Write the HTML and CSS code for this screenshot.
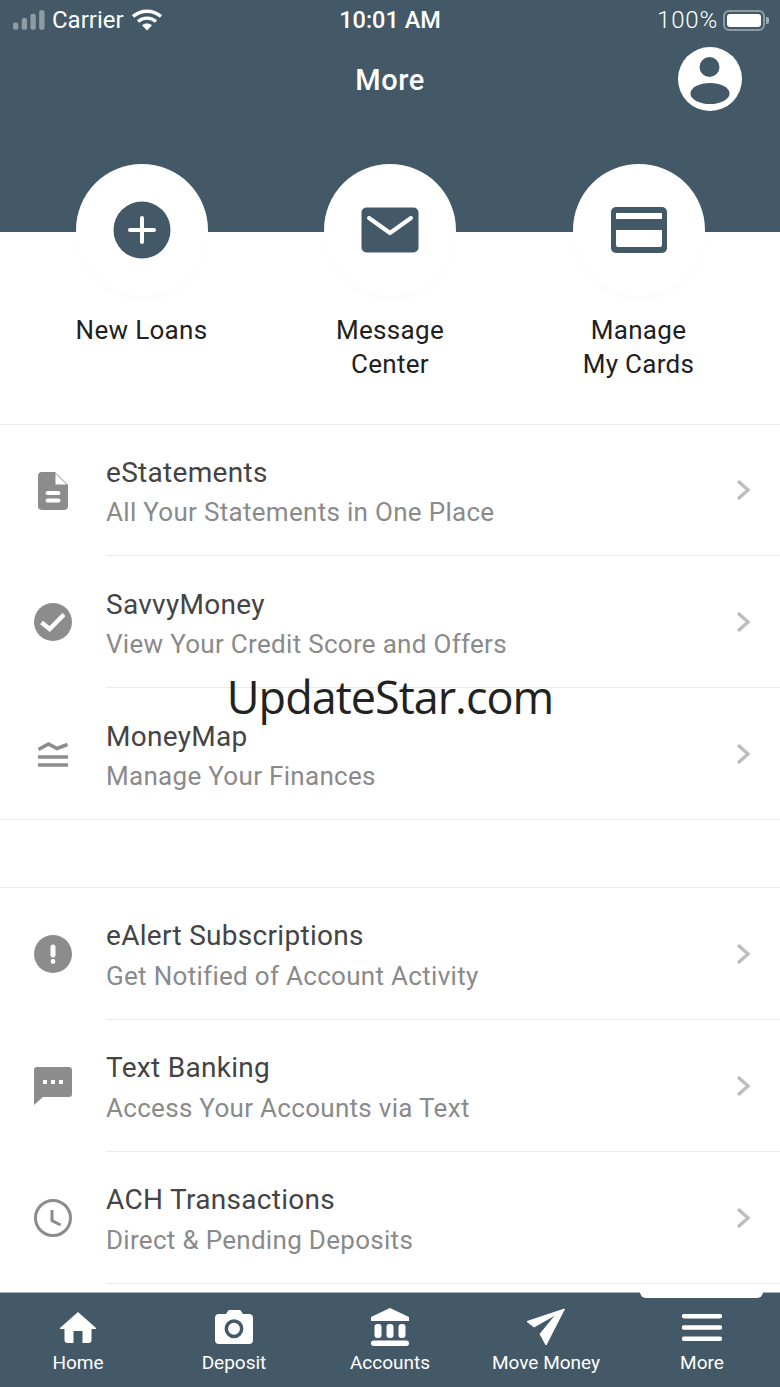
FILE: index.html

```html
<!DOCTYPE html>
<html lang="en">
<head>
  <meta charset="UTF-8">
  <title>More</title>
  <link rel="stylesheet" href="styles.css">
</head>
<body>
<div class="screen">
  <div class="top">
    <div class="status">
      <div class="status-left">
        <svg class="signal" width="32" height="20" viewBox="0 0 33 20">
          <rect x="0" y="12.500" width="5.500" height="7.500" rx="2"/>
          <rect x="9" y="8" width="5.500" height="12" rx="2"/>
          <rect x="18" y="3.500" width="5.500" height="16.500" rx="2"/>
          <rect x="27" y="0" width="5.500" height="20" rx="2"/>
        </svg>
        <span>Carrier</span>
        <svg class="wifi" width="30" height="22" viewBox="0 0 30 22">
          <path d="M1 7.500C9 .5 21 .5 29 7.500" fill="none" stroke="#fff" stroke-width="3.400"/>
          <path d="M6 12.500C11 8 19 8 24 12.500" fill="none" stroke="#fff" stroke-width="3.400"/>
          <path d="M10 16.200C13 14 17 14 20 16.200L15 21.500z" fill="#fff"/>
        </svg>
      </div>
      <div class="status-time">10:01 AM</div>
      <div class="status-right">
        <span>100%</span>
        <div class="battery"><div class="battery-fill"></div></div>
        <div class="battery-tip"></div>
      </div>
    </div>
    <div class="titlebar">
      <div></div>
      <div class="title">More</div>
      <svg class="avatar" width="64" height="64" viewBox="0 0 64 64">
        <circle cx="32" cy="32" r="32" fill="#fff"/>
        <circle cx="31.500" cy="20" r="10" fill="#435967"/>
        <ellipse cx="32" cy="46.500" rx="19.500" ry="10.500" fill="#435967"/>
      </svg>
    </div>
  </div>

  <div class="actions">
    <div class="action">
      <div class="action-circle">
        <svg width="58" height="58" viewBox="0 0 58 58">
          <circle cx="29" cy="29" r="28.500" fill="#435967"/>
          <path d="M29 17V41M17 29H41" stroke="#fff" stroke-width="4" stroke-linecap="round"/>
        </svg>
      </div>
      <div class="action-label">New Loans</div>
    </div>
    <div class="action">
      <div class="action-circle">
        <svg width="58" height="46" viewBox="0 0 58 46">
          <rect x="0.500" y="0.500" width="57" height="45" rx="5" fill="#435967"/>
          <path d="M8 11L29 26L50 11" fill="none" stroke="#fff" stroke-width="4" stroke-linecap="round" stroke-linejoin="round"/>
        </svg>
      </div>
      <div class="action-label">Message<br>Center</div>
    </div>
    <div class="action">
      <div class="action-circle">
        <svg width="56" height="46" viewBox="0 0 56 46">
          <rect x="0" y="0" width="56" height="46" rx="5" fill="#435967"/>
          <rect x="5" y="6" width="46" height="6" fill="#fff"/>
          <path d="M5 23H51V38a2 2 0 0 1-2 2H7a2 2 0 0 1-2-2z" fill="#fff"/>
        </svg>
      </div>
      <div class="action-label">Manage<br>My Cards</div>
    </div>
  </div>

  <div class="list first">
    <div class="row">
      <div class="row-icon">
        <svg width="30" height="38" viewBox="0 0 30 38">
          <path d="M4 0H17L30 13V34a4 4 0 0 1-4 4H4a4 4 0 0 1-4-4V4a4 4 0 0 1 4-4z" fill="#8c8c8c"/>
          <path d="M17.500 1.500V12.500H28.500z" fill="#fff"/>
          <path d="M9.500 21H20.500M9.500 28.500H20.500" stroke="#fff" stroke-width="3.800" stroke-linecap="round"/>
        </svg>
      </div>
      <div class="row-body">
        <div class="row-text">
          <div class="row-name">eStatements</div>
          <div class="row-sub">All Your Statements in One Place</div>
        </div>
        <svg class="chevron" width="14" height="22" viewBox="0 0 14 22"><path d="M2 2L12 11L2 20" fill="none" stroke="#bdbdbd" stroke-width="3.500"/></svg>
      </div>
    </div>
    <div class="row">
      <div class="row-icon">
        <svg width="38" height="38" viewBox="0 0 38 38">
          <circle cx="19" cy="19" r="19" fill="#8c8c8c"/>
          <path d="M7.500 19.500L15.700 26L30 11.500" fill="none" stroke="#fff" stroke-width="4.400"/>
        </svg>
      </div>
      <div class="row-body">
        <div class="row-text">
          <div class="row-name">SavvyMoney</div>
          <div class="row-sub">View Your Credit Score and Offers</div>
        </div>
        <svg class="chevron" width="14" height="22" viewBox="0 0 14 22"><path d="M2 2L12 11L2 20" fill="none" stroke="#bdbdbd" stroke-width="3.500"/></svg>
      </div>
    </div>
    <div class="row last">
      <div class="row-icon">
        <svg width="30" height="26" viewBox="0 0 30 26" fill="none" stroke="#8c8c8c" stroke-width="3.500">
          <path d="M0.500 8.500L10.500 3L19 7.500L29.500 3.500"/>
          <path d="M0 16H30M0 24H30"/>
        </svg>
      </div>
      <div class="row-body">
        <div class="row-text">
          <div class="row-name">MoneyMap</div>
          <div class="row-sub">Manage Your Finances</div>
        </div>
        <svg class="chevron" width="14" height="22" viewBox="0 0 14 22"><path d="M2 2L12 11L2 20" fill="none" stroke="#bdbdbd" stroke-width="3.500"/></svg>
      </div>
    </div>
  </div>

  <div class="list second">
    <div class="row">
      <div class="row-icon">
        <svg width="38" height="38" viewBox="0 0 38 38">
          <circle cx="19" cy="19" r="19" fill="#8c8c8c"/>
          <path d="M19 12V20" stroke="#fff" stroke-width="5" stroke-linecap="round"/>
          <circle cx="19" cy="26.500" r="2.400" fill="#fff"/>
        </svg>
      </div>
      <div class="row-body">
        <div class="row-text">
          <div class="row-name">eAlert Subscriptions</div>
          <div class="row-sub">Get Notified of Account Activity</div>
        </div>
        <svg class="chevron" width="14" height="22" viewBox="0 0 14 22"><path d="M2 2L12 11L2 20" fill="none" stroke="#bdbdbd" stroke-width="3.500"/></svg>
      </div>
    </div>
    <div class="row">
      <div class="row-icon">
        <svg width="38" height="38" viewBox="0 0 38 38">
          <path d="M3 0H35a3 3 0 0 1 3 3V27a3 3 0 0 1-3 3H9L0 38V3a3 3 0 0 1 3-3z" fill="#8c8c8c"/>
          <rect x="9" y="13" width="4" height="4" fill="#fff"/>
          <rect x="17" y="13" width="4" height="4" fill="#fff"/>
          <rect x="25" y="13" width="4" height="4" fill="#fff"/>
        </svg>
      </div>
      <div class="row-body">
        <div class="row-text">
          <div class="row-name">Text Banking</div>
          <div class="row-sub">Access Your Accounts via Text</div>
        </div>
        <svg class="chevron" width="14" height="22" viewBox="0 0 14 22"><path d="M2 2L12 11L2 20" fill="none" stroke="#bdbdbd" stroke-width="3.500"/></svg>
      </div>
    </div>
    <div class="row">
      <div class="row-icon">
        <svg width="38" height="38" viewBox="0 0 38 38" fill="none" stroke="#8c8c8c" stroke-width="3">
          <circle cx="19" cy="19" r="17.500"/>
          <path d="M18 11V21.500L26.500 26"/>
        </svg>
      </div>
      <div class="row-body">
        <div class="row-text">
          <div class="row-name">ACH Transactions</div>
          <div class="row-sub">Direct &amp; Pending Deposits</div>
        </div>
        <svg class="chevron" width="14" height="22" viewBox="0 0 14 22"><path d="M2 2L12 11L2 20" fill="none" stroke="#bdbdbd" stroke-width="3.500"/></svg>
      </div>
    </div>
  </div>

  <div class="tabbar">
    <div class="tab-marker"></div>
    <div class="tab">
      <div class="tab-icon">
        <svg width="36" height="31" viewBox="0 0 36 31">
          <path d="M18 0L36 16V17H31.500V28a3 3 0 0 1-3 3H22.500V19H13.500V31H7.500a3 3 0 0 1-3-3V17H0V16z" fill="#fff"/>
        </svg>
      </div>
      <span>Home</span>
    </div>
    <div class="tab">
      <div class="tab-icon">
        <svg width="38" height="34" viewBox="0 0 38 34">
          <path d="M4 4H11L13 1a2 2 0 0 1 2-1H24a2 2 0 0 1 2 1L28 4H34a4 4 0 0 1 4 4V30a4 4 0 0 1-4 4H4a4 4 0 0 1-4-4V8a4 4 0 0 1 4-4z" fill="#fff"/>
          <circle cx="19" cy="18.700" r="7.700" fill="none" stroke="#435967" stroke-width="3.500"/>
        </svg>
      </div>
      <span>Deposit</span>
    </div>
    <div class="tab">
      <div class="tab-icon">
        <svg width="38" height="38" viewBox="0 0 38 38">
          <path d="M19 0L38 9V13H0V9z" fill="#fff"/>
          <rect x="3.500" y="16" width="7" height="14" rx="3" fill="#fff"/>
          <rect x="15.500" y="16" width="7" height="14" rx="3" fill="#fff"/>
          <rect x="27.500" y="16" width="7" height="14" rx="3" fill="#fff"/>
          <rect x="0" y="32.500" width="38" height="5.500" rx="2.700" fill="#fff"/>
        </svg>
      </div>
      <span>Accounts</span>
    </div>
    <div class="tab">
      <div class="tab-icon">
        <svg width="40" height="38" viewBox="0 0 40 38">
          <path d="M38.500 1L1 13.500L8 19L30 6.500L14 26L20 37z" fill="#fff" stroke="#fff" stroke-linejoin="round"/>
        </svg>
      </div>
      <span>Move Money</span>
    </div>
    <div class="tab">
      <div class="tab-icon">
        <svg width="40" height="27" viewBox="0 0 40 27">
          <path d="M2 2.200H38M2 13.500H38M2 24.800H38" stroke="#fff" stroke-width="4.400" stroke-linecap="round"/>
        </svg>
      </div>
      <span>More</span>
    </div>
  </div>

  <div class="watermark">UpdateStar.com</div>
</div>
</body>
</html>
```

FILE: styles.css

```css
body {
  margin: 0;
  background: #fff;
}

.screen {
  width: 780px;
  height: 1387px;
  position: relative;
  overflow: hidden;
  display: flex;
  flex-direction: column;
  font-family: Roboto, "Liberation Sans", sans-serif;
}

.top {
  height: 232px;
  background: #435967;
  color: #fff;
  flex: none;
}

.status {
  height: 40px;
  padding: 0 11px 0 13px;
  display: grid;
  grid-template-columns: 1fr auto 1fr;
  align-items: center;
  font-size: 24px;
}

.status-left {
  display: flex;
  align-items: center;
  gap: 7px;
}

.wifi {
  margin-left: 1px;
}

.signal {
  fill: #fff;
  fill-opacity: 0.4;
}

.status-time {
  font-size: 23.500px;
  font-weight: 500;
  margin-left: -2px;
}

.status-right {
  display: flex;
  align-items: center;
  justify-content: flex-end;
}

.status-right span {
  margin-right: 5px;
  font-weight: 300;
  letter-spacing: 0.8px;
}

.battery {
  width: 42px;
  height: 21px;
  box-sizing: border-box;
  border: 2px solid rgba(255, 255, 255, 0.4);
  border-radius: 6px;
  padding: 2px;
}

.battery-fill {
  height: 100%;
  background: #fff;
  border-radius: 3px;
}

.battery-tip {
  width: 3px;
  height: 7px;
  margin-left: 1px;
  background: rgba(255, 255, 255, 0.5);
  border-radius: 0 2px 2px 0;
}

.titlebar {
  display: grid;
  grid-template-columns: 1fr auto 1fr;
  align-items: center;
  padding: 7px 38px 0;
}

.title {
  font-size: 29px;
  font-weight: 500;
  letter-spacing: 0.5px;
  padding-top: 2px;
}

.avatar {
  justify-self: end;
  display: block;
}

.actions {
  display: grid;
  grid-template-columns: repeat(3, 248.500px);
  justify-content: center;
  margin-top: -68px;
  height: 260px;
  position: relative;
  flex: none;
}

.action {
  display: flex;
  flex-direction: column;
  align-items: center;
}

.action-circle {
  width: 132px;
  height: 132px;
  border-radius: 50%;
  background: #fff;
  box-shadow: 0 3px 5px rgba(0, 0, 0, 0.02);
  display: flex;
  align-items: center;
  justify-content: center;
}

.action-label {
  margin-top: 17px;
  font-size: 26px;
  line-height: 34px;
  letter-spacing: 0.3px;
  text-align: center;
  color: #212121;
}

.list {
  border-top: 1px solid #ececec;
  flex: none;
}

.list.second {
  margin-top: 67px;
}

.row {
  height: 132px;
  display: flex;
  box-sizing: border-box;
}

.list.first .row:first-child {
  height: 131px;
}

.row.last {
  border-bottom: 1px solid #ececec;
}

.row-icon {
  width: 106px;
  flex: none;
  display: flex;
  align-items: center;
  justify-content: center;
}

.row-body {
  flex: 1;
  display: flex;
  align-items: center;
  justify-content: space-between;
  padding-right: 30px;
  border-bottom: 1px solid #ececec;
}

.row.last .row-body {
  border-bottom: 0;
}

.row-text {
  padding-top: 5px;
}

.list.second .row-text {
  padding-top: 4px;
}

.row-name {
  font-size: 28px;
  line-height: 40px;
  letter-spacing: 0.3px;
  color: #444;
}

.row-sub {
  margin-top: -1px;
  font-size: 26px;
  line-height: 40px;
  letter-spacing: 0.3px;
  color: #8a8a8a;
}

.list.second .row-sub {
  margin-top: 0;
}

.tabbar {
  margin-top: auto;
  height: 95px;
  box-sizing: border-box;
  border-top: 1px solid #a9b5bc;
  background: #435967;
  display: grid;
  grid-template-columns: repeat(5, 156px);
  position: relative;
  flex: none;
  color: #fff;
}

.tab-marker {
  position: absolute;
  left: 640px;
  top: -1px;
  width: 123px;
  height: 6px;
  background: #fff;
  border-radius: 0 0 6px 6px;
}

.tab {
  display: flex;
  flex-direction: column;
  align-items: center;
  padding-top: 14px;
  font-size: 19px;
  line-height: 24px;
  gap: 4px;
}

.tab-icon {
  height: 40px;
  display: flex;
  align-items: center;
}

.watermark {
  position: absolute;
  left: 0;
  right: 0;
  top: 666px;
  text-align: center;
  font-family: "Open Sans", sans-serif;
  font-size: 45px;
  line-height: 62px;
  letter-spacing: -1px;
  color: #222;
}
```
